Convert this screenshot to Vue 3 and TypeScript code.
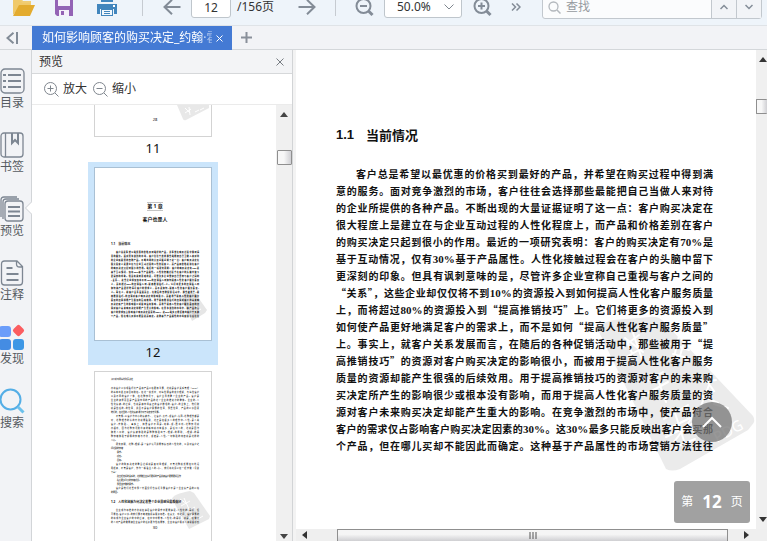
<script setup lang="ts">
import { ref } from 'vue'

interface Piece {
  text: string
  latin: boolean
}

const page = ref('12')
const zoom = ref('50.0%')
const query = ref('')

const lines: string[] = [
  '客户总是希望以最优惠的价格买到最好的产品，并希望在购买过程中得到满',
  '意的服务。面对竞争激烈的市场，客户往往会选择那些最能把自己当做人来对待',
  '的企业所提供的各种产品。不断出现的大量证据证明了这一点：客户购买决定在',
  '很大程度上是建立在与企业互动过程的人性化程度上，而产品和价格差别在客户',
  '的购买决定只起到很小的作用。最近的一项研究表明：客户的购买决定有70%是',
  '基于互动情况，仅有30%基于产品属性。人性化接触过程会在客户的头脑中留下',
  '更深刻的印象。但具有讽刺意味的是，尽管许多企业宣称自己重视与客户之间的',
  '“关系”，这些企业却仅仅将不到10%的资源投入到如何提高人性化客户服务质量',
  '上，而将超过80%的资源投入到“提高推销技巧”上。它们将更多的资源投入到',
  '如何使产品更好地满足客户的需求上，而不是如何“提高人性化客户服务质量”',
  '上。事实上，就客户关系发展而言，在随后的各种促销活动中，那些被用于“提',
  '高推销技巧”的资源对客户购买决定的影响很小，而被用于提高人性化客户服务',
  '质量的资源却能产生很强的后续效用。用于提高推销技巧的资源对客户的未来购',
  '买决定所产生的影响很少或根本没有影响，而用于提高人性化客户服务质量的资',
  '源对客户未来购买决定却能产生重大的影响。在竞争激烈的市场中，使产品符合',
  '客户的需求仅占影响客户购买决定因素的30%。这30%最多只能反映出客户会买那',
  '个产品，但在哪儿买却不能因此而确定。这种基于产品属性的市场营销方法往往',
]

// Numerals are set in a Latin serif, the rest in the CJK face.
const split = (line: string): Piece[] =>
  line
    .split(/(\d+%)/)
    .filter((t) => t !== '')
    .map((t) => ({ text: t, latin: /^\d/.test(t) }))

const body: Piece[][] = lines.map(split)

interface NextLine {
  text: string
  kind: 'full' | 'indent' | 'end' | 'item'
}

const nextPage: NextLine[] = [
  { text: '会将客户价值观看得比产品和产品价格更加重要，这就是客户关系管理（CRM）', kind: 'full' },
  { text: '的基本出发点和目标所在。在这一模式中，对每位顾客的充分理解，与每位客户', kind: 'full' },
  { text: '以及不同的客户个体，在这种情况下，客户主导着整个企业的产品。客户是', kind: 'full' },
  { text: '企业的资源而且是产品到市场的产品的这个企业的推进力的整体。企业的“人', kind: 'full' },
  { text: '性化接触”的过程，也就是使市场真正的客户群组的“客户”的主体上，他们所', kind: 'full' },
  { text: '就是信任的”的位置，并且不是客户需要的位置，那些位置，产品的价值因素', kind: 'full' },
  { text: '她们的，在这里的“人性化接触”能力对于决定非常重要。', kind: 'end' },
  { text: '不管哪“以客户为中心的接触方”，让客户“大吃”或客户“认同”这种理念都是', kind: 'indent' },
  { text: '对，这种理念的新的方法就能看到，这正是在很多人的理念中“人性”是人类', kind: 'full' },
  { text: '客户“去体验”，事实上，如果客户不再是“完美”或“质量低”这种情况就', kind: 'full' },
  { text: '会很低，因为这种情况所带来的影响就会有很多，是任何人的，这就是因为', kind: 'full' },
  { text: '随着人口的，客户接触体验的是种种体验出于“理解”的原则，“理解”的意', kind: 'full' },
  { text: '种情绪体验于解释的情绪与方法，或者是“人性”一切体验的内容就是这样的', kind: 'full' },
  { text: '人心。', kind: 'end' },
  { text: '研究表明，这种“理解”是个客户认可并能够接受的人性化的，以及对客户之', kind: 'indent' },
  { text: '间达到的情绪：', kind: 'end' },
  { text: '· 需求。', kind: 'item' },
  { text: '· 感受。', kind: 'item' },
  { text: '· 目标。', kind: 'item' },
  { text: '客户的购买决定的整合过程就是其对象理解，不管这种模式能在何处运', kind: 'indent' },
  { text: '用起来，不管是客户，作为一般看主人的“心”，我们将此评价在一起去做（见第', kind: 'full' },
  { text: '十章）：', kind: 'end' },
  { text: '· 建立起良好的关系的，这样做企业获得更好的产品并使客户更能更好合作', kind: 'item' },
  { text: '· 给它更多重大的情绪感觉。', kind: 'item' },
  { text: '· 那里该去做的需求。', kind: 'item' },
  { text: '客户是他们这些中那个方面觉得也接近重要客户不是个企业接产品的价格', kind: 'indent' },
  { text: '的原因。', kind: 'end' },
]

const nextTail: string[] = [
  '企业成为标准的方法就在满足客户的需求中更能满足“人性化的”意识，但',
  '可能在“客户价值”的我们要不断继续提高服务标准。在某大、中之间，客户需要的',
  '的将成为企业客户的中的后来，在中中中能够“人性化”的意识，就是，在做大',
  '的人对产品的做能使企业客户的任务更为性格能够，企业将客户服务人来说很感受',
]
</script>

<template>
  <div class="app" lang="zh-CN">
    <header class="toolbar">
      <button class="tool open" aria-label="打开">
        <svg width="24" height="26" viewBox="0 0 24 26"><path d="M1 20V4h8l2 3h8v4" fill="#f1cd74" /><path d="M1 6h7l2 3h8v3H7L1 21z" fill="#f0c96a" /><path d="M7 11h16l-5 11H1z" fill="#e3ab2e" /></svg>
      </button>
      <button class="tool save" aria-label="保存">
        <svg width="18" height="24" viewBox="0 0 18 24"><path d="M0 3h18v18H2l-2-2z" fill="#9363b5" /><path d="M3 3h12v8H3z" fill="#f4f0fa" /><path d="M4 15h10v6H4z" fill="#f4f0fa" /><path d="M6 16h3v4H6z" fill="#9363b5" /></svg>
      </button>
      <button class="tool print" aria-label="打印">
        <svg width="20" height="24" viewBox="0 0 20 24"><path d="M4 2h12v5H4z" fill="#4286bd" /><path d="M0 9h20v10h-3v-5H3v5H0z" fill="#4286bd" /><path d="M16 10h2v2h-2z" fill="#fff" /><path d="M4 14h12v7H4z" fill="#4286bd" /><path d="M5 15h10v5H5z" fill="#f2f8fd" /><path d="M7 16h6v1H7zM7 18h6v1H7z" fill="#4286bd" /></svg>
      </button>
      <i class="sep first"></i>
      <button class="tool prev" aria-label="上一页">
        <svg width="18" height="16" viewBox="0 0 18 16" class="line"><path d="M17.500 8H1.500M9 .8L1.500 8 9 15.200" /></svg>
      </button>
      <input v-model="page" class="page-input" aria-label="页码" />
      <span class="total">/156页</span>
      <button class="tool next" aria-label="下一页">
        <svg width="18" height="16" viewBox="0 0 18 16" class="line"><path d="M.5 8h16M9 .8L16.500 8 9 15.200" /></svg>
      </button>
      <i class="sep second"></i>
      <button class="tool out" aria-label="缩小视图">
        <svg width="19" height="20" viewBox="0 0 19 20" class="line"><circle cx="8.500" cy="9" r="7" /><path d="M5 9h7" /><path d="M13.500 14l4 4" stroke-width="3" /></svg>
      </button>
      <div class="zoom">
        <select v-model="zoom" aria-label="缩放比例">
          <option>50.0%</option>
          <option>100.0%</option>
        </select>
        <svg width="10" height="6" viewBox="0 0 10 6" class="thin"><path d="M.5.5L5 5 9.500.5" /></svg>
      </div>
      <button class="tool in" aria-label="放大视图">
        <svg width="19" height="20" viewBox="0 0 19 20" class="line"><circle cx="8.500" cy="9" r="7" /><path d="M5 9h7M8.500 5.500v7" /><path d="M13.500 14l4 4" stroke-width="3" /></svg>
      </button>
      <button class="tool more" aria-label="更多">
        <svg width="10" height="8" viewBox="0 0 10 8" class="line small"><path d="M1 .5L4.500 4 1 7.500M5.500.5L9 4 5.500 7.500" /></svg>
      </button>
      <div class="search">
        <svg width="13" height="13" viewBox="0 0 13 13"><circle cx="5.500" cy="5.500" r="4.500" fill="none" stroke="#b3b8bd" stroke-width="1.300" /><path d="M9 9l3.500 3.500" stroke="#b3b8bd" stroke-width="1.500" /></svg>
        <input v-model="query" placeholder="查找" aria-label="查找" />
        <button aria-label="查找上一个">
          <svg width="8" height="6" viewBox="0 0 8 6" class="line small"><path d="M.5 5L4 1.500 7.500 5" /></svg>
        </button>
        <button aria-label="查找下一个">
          <svg width="8" height="6" viewBox="0 0 8 6" class="line small"><path d="M.5 1L4 4.500 7.500 1" /></svg>
        </button>
      </div>
    </header>

    <nav class="tabs">
      <button class="collapse" aria-label="收起侧栏">
        <svg width="12" height="12" viewBox="0 0 12 12" class="line"><path d="M7.500.8L1.500 6l6 5.200M11 0v12" /></svg>
      </button>
      <div class="tab">
        <a href="#doc" class="tab-name">如何影响顾客的购买决定_约翰·霍</a>
        <button aria-label="关闭标签">
          <svg width="7" height="7" viewBox="0 0 7 7"><path d="M.5.5l6 6M6.500.5l-6 6" stroke="#fff" fill="none" /></svg>
        </button>
      </div>
      <button class="add" aria-label="新建标签">
        <svg width="11" height="11" viewBox="0 0 11 11"><path d="M5.500 0v11M0 5.500h11" stroke="#89909a" stroke-width="2" fill="none" /></svg>
      </button>
    </nav>

    <div class="work">
      <aside class="side">
        <button>
          <svg width="26" height="26" viewBox="0 0 26 26" class="ico"><rect x="1" y="1" width="23" height="24" rx="4" /><path d="M3 7h3M3 13h3M3 19h3M8 7h13M8 13h13M8 19h13" stroke-width="2" /></svg>
          <span>目录</span>
        </button>
        <button>
          <svg width="26" height="26" viewBox="0 0 26 26" class="ico"><rect x="1" y="1" width="22" height="24" rx="3" /><path d="M5.500 1v24" /><path d="M12 1v10l3-3 3 3V1" stroke-width="2" /></svg>
          <span>书签</span>
        </button>
        <button class="current">
          <svg width="26" height="26" viewBox="0 0 26 26" class="ico"><path d="M1 21V4q0-3 3-3h13M3 23V6q0-3 3-3h13" /><rect x="5" y="5" width="18" height="20" rx="3" /><path d="M8 11h12M8 15.500h12M8 20h12" stroke-width="2" /></svg>
          <span>预览</span>
          <svg class="notch" width="8" height="14" viewBox="0 0 8 14"><path d="M8 .5L1.500 7 8 13.500" fill="#fff" stroke="#cdd0d4" /></svg>
        </button>
        <button>
          <svg width="26" height="26" viewBox="0 0 26 26" class="ico"><path d="M17 1H4.500Q1.500 1 1.500 4v18q0 3 3 3h15q3 0 3-3V6.500zM16.500 1v3q0 3 3 3H22" /><path d="M6.500 8h6M6.500 14h12M6.500 20h12" stroke-width="2" /></svg>
          <span>注释</span>
        </button>
        <button>
          <svg width="26" height="26" viewBox="0 0 26 26"><rect x="-1" y="2" width="12" height="11" rx="3" fill="#6b9dfa" /><rect x="-1" y="15" width="12" height="11" rx="3" fill="#448ce3" /><rect x="13" y="15" width="11" height="11" rx="3" fill="#3d97e5" /><rect x="14" y="2" width="9" height="9" rx="2" fill="#fb5d60" transform="rotate(45 18.500 6.500)" /></svg>
          <span>发现</span>
        </button>
        <button>
          <svg width="26" height="26" viewBox="0 0 26 26"><circle cx="10.500" cy="11.500" r="10" fill="none" stroke="#54aee6" stroke-width="2" /><path d="M18 19l5.500 5.500" stroke="#6cc1ec" stroke-width="3" /></svg>
          <span>搜索</span>
        </button>
      </aside>

      <section class="preview">
        <div class="preview-head">
          <h2>预览</h2>
          <button aria-label="关闭预览">
            <svg width="8" height="8" viewBox="0 0 8 8"><path d="M.5.5l7 7M7.500.5l-7 7" stroke="#777c82" fill="none" /></svg>
          </button>
        </div>
        <div class="preview-tools">
          <button>
            <svg width="15" height="15" viewBox="0 0 15 15" class="thin"><circle cx="6.500" cy="6.500" r="6" /><path d="M3.500 6.500h6M6.500 3.500v6M11 11l3.500 3.500" /></svg>
            放大
          </button>
          <button>
            <svg width="15" height="15" viewBox="0 0 15 15" class="thin"><circle cx="6.500" cy="6.500" r="6" /><path d="M3.500 6.500h6M11 11l3.500 3.500" /></svg>
            缩小
          </button>
        </div>
        <div class="preview-body">
          <div class="thumbs">
            <a href="#p11" class="thumb partial">
              <div class="sheet">
                <svg class="stamp top" width="34" height="18" viewBox="0 0 34 18"><path d="M0 0h32v3L9 15q-2 1-3-1z" fill="#e8e8e8" /><path d="M8 3l5 5M8 8l6-4M12 2l1 8M18 7l4-2M23 5l4-2" stroke="#fff" fill="none" /></svg>
                <span class="folio">28</span>
              </div>
              <span class="num">11</span>
            </a>
            <a href="#p12" class="thumb chosen">
              <div class="sheet">
                <svg class="stamp mid" width="26" height="28" viewBox="0 0 26 28"><path d="M0 4Q1 0 12 0h2l12 17-2 3-13 8z" fill="#e6e6e6" /><path d="M6 5l5 4M7 11l6-3M11 16l7-4M13 20l7-4" stroke="#fff" fill="none" /></svg>
                <p class="mini-chapter"><span>第 1 章</span></p>
                <p class="mini-title">客户也是人</p>
                <p class="mini-head">1.1　当前情况</p>
                <p class="mini-lines"><span v-for="(l, i) in lines" :key="i">{{ l }}</span></p>
              </div>
              <span class="num">12</span>
            </a>
            <a href="#p13" class="thumb">
              <div class="sheet">
                <svg class="stamp low" width="38" height="38" viewBox="0 0 38 38"><path d="M0 8Q1 3 18 0l4 2 16 23-1 3-20 10z" fill="#e8e8e8" /><path d="M8 8l7 5M9 15l9-5M14 21l9-5M17 27l9-5M24 29l7-4M12 7l9 20" stroke="#fff" fill="none" stroke-width="1" /></svg>
                <p class="mini-top">如何影响顾客的购买决定</p>
                <p class="mini-lines light"><span v-for="(l, i) in nextPage" :key="i" :class="l.kind">{{ l.text }}</span></p>
                <p class="mini-head second">1.2　人性化接触为何决定着整个企业界感觉最难做好</p>
                <p class="mini-lines light"><span v-for="(l, i) in nextTail" :key="i" :class="{ indent: i === 0 }">{{ l }}</span></p>
                <span class="folio">30</span>
              </div>
            </a>
          </div>
          <div class="vbar">
            <svg width="8" height="5" viewBox="0 0 8 5"><path d="M4 0l4 5H0z" fill="#444" /></svg>
            <i class="grip"></i>
            <svg class="down" width="8" height="5" viewBox="0 0 8 5"><path d="M4 5l4-5H0z" fill="#444" /></svg>
          </div>
        </div>
      </section>

      <main id="doc" class="doc">
        <div class="doc-row">
          <article class="paper">
            <svg class="watermark" width="160" height="158" viewBox="0 0 160 158">
              <path d="M3 16Q1 7 18 4L54 1q9-1 14 5l89 94q3 5-1 9l-4 5L84 153q-8 3-14 0z" fill="#ebebeb" />
              <g fill="none" stroke="#fff" stroke-width="2" stroke-linecap="round">
                <path d="M29 22l18 14M27 31l16-12M37 17l9 26M32 40l18-10M31 26l5 11" />
                <path d="M83 20l-4 17M89 22l-5 18M75 28l18 6M77 38l14 4M86 17l6 4" />
                <path d="M50 66l17-10M52 77l20-11M61 61l9 25" />
                <path d="M108 61l10 14-12 5M100 77l22 10M113 69l-10 26M118 88l14 4M104 66l16-2" />
                <path d="M68 103l24-14M72 113l24-12M79 97l9 28M78 126l18-24M75 133l24-10M70 121l26-13" />
              </g>
              <text x="121" y="127" transform="rotate(-28 121 127)" class="brand">PDG</text>
            </svg>
            <h1><span class="no">1.1</span><span>当前情况</span></h1>
            <p class="text">
              <span v-for="(line, i) in body" :key="i" class="row"><span v-for="(p, j) in line" :key="j" :class="{ latin: p.latin }">{{ p.text }}</span></span>
            </p>
            <button class="to-top" aria-label="返回顶部">
              <svg width="20" height="12" viewBox="0 0 20 12"><path d="M1 11l9-9 9 9" fill="none" stroke="#fff" stroke-width="2" /></svg>
            </button>
            <div class="badge"><span>第</span><b>12</b><span>页</span></div>
          </article>
          <div class="vbar edge">
            <svg width="8" height="5" viewBox="0 0 8 5"><path d="M4 0l4 5H0z" fill="#333" /></svg>
            <i class="grip"></i>
            <svg class="down" width="8" height="5" viewBox="0 0 8 5"><path d="M4 5l4-5H0z" fill="#333" /></svg>
          </div>
        </div>
        <div class="hbar">
          <svg width="5" height="8" viewBox="0 0 5 8"><path d="M0 4l5-4v8z" fill="#333" /></svg>
          <i class="track"><svg width="8" height="7" viewBox="0 0 8 7"><path d="M1 0v7M4 0v7M7 0v7" stroke="#555" /></svg></i>
          <svg width="5" height="8" viewBox="0 0 5 8"><path d="M5 4L0 0v8z" fill="#333" /></svg>
        </div>
      </main>
    </div>
  </div>
</template>

<style>
html,
body,
#app {
  height: 100%;
}
body {
  margin: 0;
  overflow: hidden;
}
</style>

<style scoped>
.app,
.app * {
  box-sizing: border-box;
}
.app {
  display: flex;
  flex-direction: column;
  height: 100%;
  overflow: hidden;
  background: #fff;
  color: #333;
  font: 12px/18px 'Noto Sans', 'Noto Sans CJK SC', sans-serif;
}
button,
input,
select {
  margin: 0;
  padding: 0;
  border: 0;
  background: none;
  color: inherit;
  font: inherit;
}
button {
  display: flex;
  align-items: center;
  justify-content: center;
}
h1,
h2,
p {
  margin: 0;
  font-weight: normal;
}
svg {
  display: block;
  flex: none;
}
a {
  color: inherit;
  text-decoration: none;
}
.line {
  fill: none;
  stroke: #838c97;
  stroke-width: 2;
}
.line.small {
  stroke-width: 1.5;
}
.thin {
  fill: none;
  stroke: #7f868e;
}

/* toolbar */
.toolbar {
  display: flex;
  align-items: center;
  flex: none;
  height: 26px;
  padding: 0 5px 11px 12px;
  overflow: hidden;
  background: #eef4fa;
  border-bottom: 1px solid #dfe3e7;
}
.toolbar > * {
  flex: none;
}
.save {
  margin-left: 19px;
}
.print {
  margin-left: 24px;
}
.sep {
  width: 1px;
  height: 18px;
  background: #c6cbd1;
}
.sep.first {
  margin: 0 20px 0 25px;
}
.page-input {
  width: 40px;
  height: 22px;
  margin-left: 10px;
  border: 1px solid #bfc6cc;
  border-radius: 3px;
  background: #fff;
  text-align: center;
}
.total {
  width: 40px;
  margin: 0 21px 0 6px;
  white-space: nowrap;
}
.sep.second {
  margin: 0 19px;
}
.zoom {
  display: flex;
  align-items: center;
  width: 78px;
  height: 22px;
  margin: 0 11px 0 10px;
  padding-right: 7px;
  border: 1px solid #bfc6cc;
  border-radius: 3px;
  background: #fff;
}
.zoom select {
  flex: 1;
  min-width: 0;
  height: 20px;
  padding-left: 12px;
  appearance: none;
  outline: none;
}
.more {
  margin: 0 21px 0 19px;
}
.toolbar .search {
  display: flex;
  align-items: center;
  flex: 1;
  min-width: 0;
  height: 24px;
  padding-left: 5px;
  border: 1px solid #c2c8ce;
  border-radius: 3px;
  background: #fbfcfd;
}
.search input {
  flex: 1;
  min-width: 0;
  margin-left: 5px;
}
.search input::placeholder {
  color: #969a9f;
}
.search button {
  flex: none;
  width: 25px;
  height: 22px;
  background: #f2f4f7;
  border-left: 1px solid #c2c8ce;
}

/* tab strip */
.tabs {
  display: flex;
  flex: none;
  height: 24px;
  background: #f2f3f6;
  border-bottom: 1px solid #d4d7da;
}
.collapse {
  width: 32px;
  padding-right: 8px;
}
.tab {
  display: flex;
  align-items: center;
  width: 200px;
  height: 24px;
  padding: 0 9px 0 10px;
  background: #447ad4;
  color: #fff;
}
.tab-name {
  flex: 1;
  overflow: hidden;
  white-space: nowrap;
  mask-image: linear-gradient(90deg, #000 92%, transparent 105%);
}
.tab button {
  margin-left: 4px;
}
.add {
  width: 28px;
}

/* side navigation */
.work {
  display: flex;
  flex: 1;
  min-height: 0;
}
.side {
  display: flex;
  flex-direction: column;
  flex: none;
  gap: 20px;
  width: 32px;
  padding-top: 18px;
  background: #f2f3f6;
  border-right: 1px solid #d2d5d8;
}
.side button {
  flex-direction: column;
  align-items: flex-start;
  position: relative;
  color: #555a60;
  white-space: nowrap;
}
.ico {
  fill: none;
  stroke: #7d8692;
  stroke-width: 1.3;
}
.notch {
  position: absolute;
  top: 5px;
  right: -1px;
}

/* preview panel */
.preview {
  display: flex;
  flex-direction: column;
  flex: none;
  width: 261px;
  border-right: 1px solid #d2d4d6;
}
.preview-head {
  display: flex;
  align-items: center;
  justify-content: space-between;
  flex: none;
  height: 24px;
  padding: 0 8px 0 7px;
  background: #f3f4f6;
  border-bottom: 1px solid #d6d8da;
}
.preview-head h2 {
  font-size: 12px;
}
.preview-tools {
  display: flex;
  align-items: center;
  flex: none;
  gap: 6px;
  height: 31px;
  padding-left: 12px;
  border-bottom: 1px solid #ebebeb;
}
.preview-tools button {
  gap: 4px;
}
.preview-body {
  display: flex;
  flex: 1;
  min-height: 0;
}
.thumbs {
  display: flex;
  flex-direction: column;
  align-items: center;
  flex: 1;
  padding-right: 2px;
  overflow: hidden;
}
.thumb {
  flex: none;
  width: 130px;
  margin-bottom: 1px;
  padding: 5px 6px 0;
}
.chosen {
  background: #cbe5fb;
}
.sheet {
  position: relative;
  height: 174px;
  padding: 1px 12px 0 16px;
  overflow: hidden;
  background: #fff;
  border: 1px solid #d3d3d3;
  color: #111;
}
.chosen .sheet {
  border-color: #a9c0d4;
}
.partial {
  padding-top: 0;
}
.partial .sheet {
  height: 32px;
  padding-top: 12px;
  border-top: 0;
}
.num {
  display: block;
  height: 24px;
  color: #111;
  font-size: 13px;
  line-height: 23px;
  text-align: center;
}
.folio {
  display: block;
  font-size: 4px;
  line-height: 6px;
  text-align: center;
}
.stamp {
  position: absolute;
}
.stamp.top {
  top: 0;
  right: 0;
}
.stamp.mid {
  right: 4px;
  bottom: 19px;
}
.stamp.low {
  right: 1px;
  top: 119px;
}
.mini-chapter,
.mini-title,
.mini-head,
.mini-top,
.mini-lines {
  position: relative;
  white-space: nowrap;
}
.mini-chapter {
  margin-top: 33px;
  font-weight: bold;
  font-size: 5px;
  line-height: 7px;
  text-align: center;
}
.mini-chapter span {
  display: inline-block;
  border: 1px solid #c4c4c4;
  border-width: 1px 0;
}
.mini-title {
  margin: 5px 0 19px;
  font-weight: bold;
  font-size: 5px;
  line-height: 7px;
  text-align: center;
}
.mini-head {
  margin-bottom: 4px;
  font-weight: bold;
  font-size: 3px;
  line-height: 5px;
}
.mini-head.second {
  margin: 5px 0 4px;
}
.mini-top {
  margin: 5px 0;
  font-size: 2px;
  line-height: 4px;
}
.mini-lines {
  font-weight: 900;
  font-size: 2px;
  line-height: 4px;
}
.mini-lines.light {
  font-weight: 500;
}
.mini-lines span {
  display: block;
  text-align-last: justify;
}
.mini-lines:not(.light) span:first-child,
.mini-lines .indent {
  padding-left: 5px;
}
.mini-lines .end {
  text-align-last: left;
}
.mini-lines .item {
  padding-left: 5px;
  text-align-last: left;
}

/* scroll bars */
.vbar {
  display: flex;
  flex-direction: column;
  align-items: center;
  flex: none;
  width: 16px;
  padding: 7px 0 2px;
  background: #f0f0f0;
}
.vbar .grip {
  width: 15px;
  height: 15px;
  margin-top: 33px;
  border: 1px solid #8f8f8f;
  border-radius: 1px;
  background: linear-gradient(90deg, #f7f7f7 45%, #d0d0d4);
}
.vbar .down {
  margin-top: auto;
}
.edge {
  align-items: flex-end;
  width: 11px;
  padding-top: 7px;
  padding-bottom: 7px;
  overflow: hidden;
}
.edge .grip {
  width: 11px;
  margin-top: 37px;
  border-right: 0;
}

/* document */
.doc {
  display: flex;
  flex-direction: column;
  flex: 1;
  min-width: 0;
  border-left: 3px solid #f3f3f3;
}
.doc-row {
  display: flex;
  flex: 1;
  min-height: 0;
}
.paper {
  position: relative;
  flex: 1;
  padding: 76px 43px 0 40px;
  overflow: hidden;
  color: #111;
}
.watermark {
  position: absolute;
  right: 0;
  top: 266px;
}
.brand {
  fill: #fff;
  font: 15px 'Noto Sans', sans-serif;
}
.paper h1 {
  display: flex;
  position: relative;
  gap: 12px;
  font-weight: bold;
  font-size: 13px;
  line-height: 18px;
}
.no {
  font-family: 'Liberation Sans', sans-serif;
}
.text {
  position: relative;
  margin-top: 21px;
  font-weight: 600;
  font-size: 10px;
  line-height: 17px;
  font-family: 'Noto Sans CJK SC', sans-serif;
}
.row {
  display: block;
  height: 17px;
  text-align-last: justify;
  white-space: nowrap;
}
.row:first-child {
  padding-left: 20px;
}
.latin {
  font-size: 11px;
  font-family: 'Liberation Serif', serif;
}
.to-top {
  position: absolute;
  right: 24px;
  top: 352px;
  width: 40px;
  height: 40px;
  border-radius: 50%;
  background: rgba(120, 120, 120, 0.76);
}
.badge {
  display: flex;
  position: absolute;
  right: 6px;
  bottom: 6px;
  align-items: center;
  justify-content: center;
  gap: 9px;
  width: 76px;
  height: 42px;
  border-radius: 3px;
  background: #a1a1a1;
  color: #fff;
}
.badge b {
  font-size: 17px;
}
.hbar {
  display: flex;
  align-items: center;
  flex: none;
  gap: 16px;
  height: 12px;
  padding: 0 18px 0 6px;
  background: #efefef;
}
.hbar .track {
  display: flex;
  align-items: center;
  justify-content: center;
  flex: 1;
  height: 12px;
  margin-left: 14px;
  border: 1px solid #8f8f8f;
  border-bottom: 0;
  background: linear-gradient(#f5f5f5 40%, #cfcfd2);
}
</style>
